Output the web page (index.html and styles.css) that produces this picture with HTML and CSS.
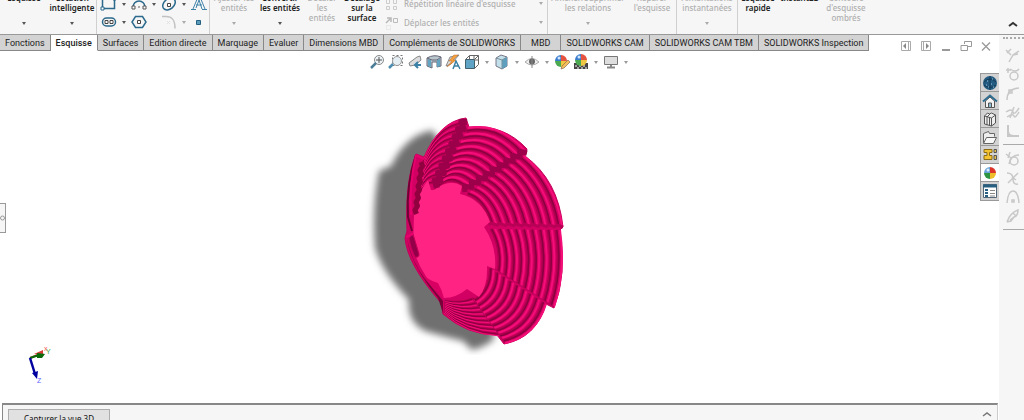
FILE: index.html
```html
<!DOCTYPE html>
<html lang="fr">
<head>
  <meta charset="UTF-8">
  <meta name="viewport" content="width=device-width, initial-scale=1.0">
  <title>SOLIDWORKS</title>
  <link rel="stylesheet" href="styles.css">
</head>
<body>
  <header class="ribbon">
    <div class="group">
      <button class="tool w-sketch"><span>Esquisse</span><i class="caret"></i></button>
      <button class="tool w-dim"><span>Cotation<br>intelligente</span><i class="caret"></i></button>
    </div>
    <div class="group shapes">
      <button class="shape" aria-label="Rectangle"><svg width="18" height="16"><path d="M2.500 2.500h12v10h-12z" fill="none" stroke="#2b6a8c" stroke-width="1.500"/><path d="M1 11h3v3H1zM13 1h3v3h-3z" fill="#fff" stroke="#2b6a8c"/></svg></button><i class="caret"></i>
      <button class="shape" aria-label="Arc"><svg width="18" height="16"><path d="M3 11a6 6 0 0 1 12 0" fill="none" stroke="#2b6a8c" stroke-width="1.500"/><path d="M2 10h3v3H2zM13 10h3v3h-3z" fill="#fff" stroke="#555"/><path d="M8 10l2 2m0-2l-2 2" stroke="#aaa"/></svg></button><i class="caret"></i>
      <button class="shape" aria-label="Ellipse"><svg width="18" height="16"><ellipse cx="9" cy="8" rx="7" ry="5" transform="rotate(-40 9 8)" fill="none" stroke="#2b6a8c" stroke-width="1.500"/><path d="M7.500 7.500h3v3h-3z" fill="#fff" stroke="#444"/></svg></button><i class="caret"></i>
      <button class="shape" aria-label="Texte"><svg width="18" height="16"><path d="M3 13L8 1h2l5 12M6 9h6M1 13.500h5m6 0h5M6 12L9 4l3 9" fill="none" stroke="#3f82a8"/></svg></button>
      <button class="shape" aria-label="Rainure"><svg width="18" height="16"><rect x="2.500" y="4" width="13" height="8" rx="4" fill="none" stroke="#2b6a8c" stroke-width="1.500"/><path d="M5 6.500h3v3H5zM10 6.500h3v3h-3z" fill="#fff" stroke="#444"/></svg></button><i class="caret"></i>
      <button class="shape" aria-label="Polygone"><svg width="18" height="16"><path d="M5.500 2.500h7L16 8l-3.500 5.500h-7L2 8z" fill="none" stroke="#2b6a8c" stroke-width="1.500"/><path d="M7.500 6.500h3v3h-3z" fill="#fff" stroke="#444"/></svg></button><i></i>
      <button class="shape" aria-label="Congé"><svg width="18" height="16"><path d="M2 2.500h4c6 0 9 3 9 12" fill="none" stroke="#c2c2c2" stroke-width="1.500"/><path d="M7 7l3 3m0-3l-3 3" stroke="#e2e2e2"/></svg></button><i class="caret dim"></i>
      <button class="shape" aria-label="Point"><svg width="18" height="16"><path d="M6.500 6.500h4v4h-4z" fill="#5b9dbd" stroke="#24607f"/></svg></button>
    </div>
    <div class="group">
      <button class="tool w-add" disabled><span>Ajuster les<br>entités</span><i class="caret"></i></button>
      <button class="tool w-conv"><span>Convertir<br>les entités</span><i class="caret"></i></button>
      <button class="tool w-off" disabled><span>Décaler<br>les<br>entités</span></button>
      <button class="tool w-off"><span>Décalage<br>sur la<br>surface</span></button>
      <div class="rows">
        <button class="row" disabled><svg width="14" height="14"><path d="M1.500 2.500h3v4h-3zM8.500 2.500h3v4h-3zM1.500 9.500h3v3h-3zM8.500 9.500h3v3h-3z" fill="none" stroke="#ccc"/></svg><span>Répétition linéaire d'esquisse</span><i class="caret"></i></button>
        <button class="row" disabled><svg width="14" height="14"><path d="M1 7l4-4M2 2h4v4" fill="none" stroke="#b8b8b8" stroke-width="1.500"/><path d="M8.500 2.500h4v4h-4z" fill="none" stroke="#bbb"/><path d="M1.500 9.500h4v4h-4z" fill="none" stroke="#ddd" stroke-dasharray="1 1"/></svg><span>Déplacer les entités</span><i class="caret"></i></button>
      </div>
    </div>
    <div class="group">
      <button class="tool w-rel" disabled><span>Afficher/Supprimer<br>les relations</span><i class="caret"></i></button>
      <button class="tool w-rep" disabled><span>Réparer<br>l'esquisse</span></button>
    </div>
    <div class="group">
      <button class="tool w-snap" disabled><span>Aimantations<br>instantanées</span><i class="caret"></i></button>
    </div>
    <div class="group last">
      <button class="tool w-off"><span>Esquisse<br>rapide</span></button>
      <button class="tool w-conv"><span>Instant2D</span></button>
      <button class="tool w-rep" disabled><span>Contours<br>d'esquisse<br>ombrés</span></button>
    </div>
    <button class="collapse" aria-label="Réduire"><svg width="10" height="6"><path d="M1 5l4-3 4 3" fill="none" stroke="#333" stroke-width="2"/></svg></button>
  </header>

  <div class="workspace">
    <main class="main">
      <div class="tabbar">
        <nav class="tabs">
          <a href="#">Fonctions</a>
          <a href="#" class="active">Esquisse</a>
          <a href="#">Surfaces</a>
          <a href="#">Edition directe</a>
          <a href="#">Marquage</a>
          <a href="#">Evaluer</a>
          <a href="#">Dimensions MBD</a>
          <a href="#">Compléments de SOLIDWORKS</a>
          <a href="#" class="wide">MBD</a>
          <a href="#">SOLIDWORKS CAM</a>
          <a href="#">SOLIDWORKS CAM TBM</a>
          <a href="#">SOLIDWORKS Inspection</a>
        </nav>
        <div class="window-buttons">
          <button aria-label="Volet gauche"><svg width="12" height="12"><path d="M1.500 1.500h9v9h-9zM8.500 2v8" fill="none" stroke="#aaa"/><path d="M6 3v6L3 6z" fill="#888"/></svg></button>
          <button aria-label="Volet droit"><svg width="12" height="12"><path d="M1.500 1.500h9v9h-9zM3.500 2v8" fill="none" stroke="#aaa"/><path d="M6 3v6l3-3z" fill="#888"/></svg></button>
          <button aria-label="Réduire"><svg width="12" height="12"><path d="M2 10h8" stroke="#999" stroke-width="2"/></svg></button>
          <button aria-label="Restaurer"><svg width="12" height="12"><path d="M4.500 4V1.500h7v5H8M1 5.500h6.500v5H1z" fill="none" stroke="#999"/></svg></button>
          <button aria-label="Fermer"><svg width="12" height="12"><path d="M2 2.500l8 8m0-8l-8 8" fill="none" stroke="#999" stroke-width="1.300"/></svg></button>
        </div>
      </div>

      <section class="canvas">
        <svg class="model" width="220" height="250" viewBox="360 105 220 250" role="img" aria-label="Bol">
          <defs>
            <filter id="soft" x="-20%" y="-20%" width="140%" height="140%"><feGaussianBlur stdDeviation="3.500"/></filter>
          </defs>
          <path filter="url(#soft)" fill="#707070" d="M432 130Q405 136 391 166L379 171Q372 205 375 248Q382 272 409 300Q407 322 425 331Q446 337 463 341L472 350Q485 347 494 339L480 200Z"/>
          <path class="body" d="M466 118Q440 121 424 157L416 154Q405 180 407 231L405 238Q407 264 441 303L443 314Q467 335 497 335L504 344Q536 338 546 304L554 308Q567 275 560 230L563 227Q558 180 525 156L527 149Q504 124 469 127Z"/>
          <g id="ribs"></g>
          <path class="floor" d="M434 190Q450 178 462 186L460 194Q482 199 490 222L484 227Q497 246 495 269L487 266Q488 286 479 297L467 289Q456 298 444 298Q424 280 413 250L414 215Q418 192 428 180L431 190Z"/>
          <g id="steps"></g>
          <path d="M421 272Q427 280 438 283Q442 290 444 298Q433 289 421 272" fill="#d90063"/>
          <path d="M407 238Q412 265 430 285L443 301V313L438 298Q410 264 407 238" fill="#7a0039"/>
          <path d="M413 234l6 20q0 4-4 3q-5-10-6-19z" fill="#92004a" stroke="#c60059"/>
          <path d="M416 155Q406 185 408 217l4 14" fill="none" stroke="#6f0034" stroke-width="2"/>
          <path d="M416 155Q409 185 411 215" fill="none" stroke="#e7006d" stroke-width="2"/>
          <path d="M416 155l8 4M406 237l7-3" stroke="#e7006d" stroke-width="2"/>
        </svg>

        <div class="headsup">
          <button aria-label="Zoom au mieux"><svg width="16" height="16"><circle cx="10" cy="6" r="4.500" fill="#eef4f7" stroke="#888"/><path d="M7 9l-5 5" stroke="#4b7d99" stroke-width="2.500"/><path d="M10 3v6M7 6h6" stroke="#555"/></svg></button>
          <button aria-label="Zoom fenêtre"><svg width="16" height="16"><path d="M4.500 1.500h10v10h-10z" fill="none" stroke="#777" stroke-dasharray="2 2"/><circle cx="9" cy="7" r="4.500" fill="#e5eef3" stroke="#999"/><path d="M5 10l-4 4" stroke="#4b8db0" stroke-width="2.500"/></svg></button>
          <button aria-label="Vue précédente"><svg width="16" height="16"><path d="M2 9l8-6 3-1 1 4-6 5-5 1z" fill="#ddd" stroke="#888"/><path d="M14 11H8m3-3l-3 3 3 3" fill="none" stroke="#3a81a5" stroke-width="2"/></svg></button>
          <button aria-label="Vue en coupe"><svg width="16" height="16"><path d="M1 4q7-4 14-1v9l-4 1V8H6v6l-5-2z" fill="#b9c6cc" stroke="#667"/><path d="M2 5l3 1v7l-3-1zM11 6l3-1v7l-3 1z" fill="#62a5c3"/><path d="M1 4l5 2h5l4-3" fill="none" stroke="#667"/></svg></button>
          <button aria-label="Vues dynamiques"><svg width="16" height="16"><path d="M1 12L5 3l9-2-8 9z" fill="#ddd" stroke="#888"/><path d="M9 1L4 7h3l-5 6 9-7H8l5-5z" fill="#f6a13c" stroke="#bb6e30" stroke-width=".5"/><path d="M8 15l3-8 4 8M9 12h5" fill="none" stroke="#3a81a5" stroke-width="1.500"/></svg></button>
          <button aria-label="Orientation"><svg width="16" height="16"><path d="M1.500 5.500h9v9h-9z" fill="#5fa4c4" stroke="#44606d"/><path d="M1.500 5.500l4-4h9v9l-4 4M5.500 1.500v4M10.500 5.500l4-4M10 1.500v4M14 6h-4" fill="none" stroke="#666"/></svg></button><i class="caret"></i>
          <button aria-label="Style d'affichage"><svg width="16" height="16"><path d="M2 4l5-3 6 2v9l-5 3-6-3z" fill="#c3dfea" stroke="#778"/><path d="M8 6l5-3v9l-5 3z" fill="#5d9fbf"/><path d="M2 4l6 2v9M8 6l5-3" fill="none" stroke="#7a929c"/></svg></button><i class="caret"></i>
          <button aria-label="Masquer/Afficher"><svg width="16" height="16"><path d="M1 8q7-7 14 0q-7 6-14 0z" fill="#eee" stroke="#aaa"/><circle cx="8" cy="7.500" r="3" fill="#666"/><path d="M8 2v12" stroke="#888"/></svg></button><i class="caret"></i>
          <button aria-label="Apparence"><svg width="16" height="16"><path d="M7 7V1a6 6 0 0 1 6 6z" fill="#e5533e"/><path d="M7 7H1a6 6 0 0 1 6-6z" fill="#397dce"/><path d="M7 7v6a6 6 0 0 1-6-6z" fill="#4baa51"/><path d="M7 7h6a6 6 0 0 1-6 6z" fill="#f0c740"/><circle cx="5" cy="4" r="1.500" fill="#cfe4f8"/><path d="M14 6l-6 6-1 3 3-1 6-6z" fill="#f4bd5d" stroke="#8a6c4e" stroke-width=".7"/></svg></button>
          <button aria-label="Scène"><svg width="16" height="16"><path d="M1 9h14v6H1z" fill="#444"/><path d="M2 12h2m2 0h2m2 0h2M4 14h2m2 0h2m2 0h2" stroke="#fff"/><path d="M8 6V0a6 6 0 0 1 6 6z" fill="#e5533e"/><path d="M8 6H2a6 6 0 0 1 6-6z" fill="#397dce"/><path d="M8 6v6a6 6 0 0 1-6-6z" fill="#4baa51"/><path d="M8 6h6a6 6 0 0 1-6 6z" fill="#f0c740"/><circle cx="6" cy="3" r="1.500" fill="#cfe4f8"/></svg></button><i class="caret"></i>
          <button aria-label="Paramètres de vue"><svg width="16" height="16"><path d="M1.500 2.500h13v8h-13z" fill="#ddd" stroke="#777"/><path d="M8 11v2M4 13.500h8" stroke="#888" stroke-width="2"/></svg></button><i class="caret"></i>
        </div>

        <button class="handle" aria-label="Afficher l'arbre"><svg width="5" height="6"><circle cx="2.500" cy="3" r="2" fill="none" stroke="#999"/></svg></button>

        <svg class="triad" width="30" height="44" viewBox="25 340 30 44">
          <path d="M30 358L43 353" stroke="#c94040" stroke-width="2"/>
          <path d="M34 354l9-4v5z" fill="#d43b36"/>
          <path d="M30 358l9-3" stroke="#086a08" stroke-width="2"/>
          <path d="M37 353l8 1-3 4-5 0z" fill="#086a08"/>
          <path d="M30 358l5 16" stroke="#0000a0" stroke-width="2.500"/>
          <path d="M32 373l6-2-1 8z" fill="#0000a0"/>
          <text x="44" y="351" fill="#f35b5b">x</text>
          <text x="46" y="354" fill="#45a845">Y</text>
          <text x="37" y="383" fill="#6060ff">Z</text>
        </svg>

        <div class="taskpane">
          <button aria-label="Communauté"><svg width="16" height="16"><circle cx="8" cy="8" r="7" fill="#245b80"/><path d="M2 7q6-6 12 0M2 10q6 5 12 0M8 1v14" fill="none" stroke="#143b58"/><path d="M5 6h1m4-2h1M4 10h1m4-1h1m1 3h1M6 12h1" stroke="#9ac6dc"/></svg></button>
          <button aria-label="Accueil"><svg width="16" height="16"><path d="M3.500 8v6.500h9V8L8 4z" fill="#f4f4f4" stroke="#555"/><path d="M1 8.500l7-6 7 6" fill="none" stroke="#2f6c8f" stroke-width="2"/><path d="M6.500 14v-4h3v4" fill="#8ebdd1" stroke="#555"/></svg></button>
          <button aria-label="Bibliothèque"><svg width="16" height="16"><path d="M2.500 5l3-3 2 1 2-1 4 2v8l-4 3-7-2z" fill="#eee" stroke="#555"/><path d="M2.500 5l7 2 4-3M5 6v8M7.500 6v8M9.500 7v8M5 6l3-3" fill="none" stroke="#555"/></svg></button>
          <button aria-label="Explorateur"><svg width="16" height="16"><path d="M1.500 14V4.500l5-2 1 2h5v3" fill="#eee" stroke="#666"/><path d="M1.500 14.500l3-6h10l-3 6z" fill="#f8f8f8" stroke="#666"/></svg></button>
          <button aria-label="Palette de vues"><svg width="16" height="16"><path d="M2 2.500h8v3H7.500v3H10v4H2v-4h3v-3H2z" fill="#f3c331" stroke="#8d6b15"/><path d="M12 2.500h2.500v3H12zM12 8.500h2.500v4H12z" fill="#e5bd49" stroke="#555"/></svg></button>
          <button class="active" aria-label="Apparences"><svg width="16" height="16"><path d="M8 8V2a6 6 0 0 1 6 6z" fill="#dc3429"/><path d="M8 8H2a6 6 0 0 1 6-6z" fill="#69a3da"/><path d="M8 8v6a6 6 0 0 1-6-6z" fill="#2d9442"/><path d="M8 8h6a6 6 0 0 1-6 6z" fill="#efbd27"/><circle cx="6" cy="5" r="1.500" fill="#dceeff"/></svg></button>
          <button aria-label="Propriétés"><svg width="16" height="16"><path d="M1.500 1.500h13v13h-13z" fill="#fff" stroke="#567"/><path d="M1 3h14" stroke="#286082" stroke-width="3"/><path d="M3 7h3M3 10h3M3 13h3" stroke="#286082" stroke-width="2"/><path d="M8 7.500h5M8 10.500h5M8 13h5" stroke="#888"/></svg></button>
        </div>
      </section>

      <footer class="bottom">
        <button class="capture">Capturer la vue 3D</button>
        <button class="expand" aria-label="Développer"><svg width="10" height="6"><path d="M1 5l4-3 4 3" fill="none" stroke="#777" stroke-width="1.500"/></svg></button>
      </footer>
    </main>

    <aside class="side">
      <button aria-label="Coupe"><svg width="16" height="16"><path d="M1 3l5 5M6 2L2 6M4 15L8 8l6-4M8 8l5-1" fill="none"/></svg></button>
      <button aria-label="Cercle tangent"><svg width="16" height="16"><path d="M1 4h5M3 2v5M5 3q6 4 9 0" fill="none"/><circle cx="9" cy="10" r="4" fill="none"/></svg></button>
      <button aria-label="Arc tangent"><svg width="16" height="16"><path d="M2 15q0-11 12-12" fill="none"/><path d="M4 5h3v3H4z"/></svg></button>
      <button aria-label="Spline"><svg width="16" height="16"><path d="M1 8q6-4 7 0t6-4M2 13q6-4 7-1t5-4M9 3l-4 11" fill="none"/></svg></button>
      <button aria-label="Congé"><svg width="16" height="16"><path d="M3 2v11h11M3 8q0 5 6 5" fill="none" stroke-width="2"/></svg></button>
      <hr>
      <button aria-label="Relation"><svg width="16" height="16"><path d="M1 3l5 4M5 1L3 7M4 13Q6 4 14 4" fill="none"/><circle cx="9" cy="10" r="4" fill="none"/></svg></button>
      <button aria-label="Intersection"><svg width="16" height="16"><path d="M2 3q6 0 6 6t5 5M13 3L3 13M7 7l4 3" fill="none"/></svg></button>
      <button aria-label="Parabole"><svg width="16" height="16"><path d="M2 14Q3 2 8 2t6 12" fill="none"/><path d="M7 11h2v2H7z"/></svg></button>
      <button aria-label="Conique"><svg width="16" height="16"><path d="M2 14Q5 5 13 2Q13 8 9 9L5 12M2 14l4-1 3-4M8 5l3 3" fill="none"/></svg></button>
      <hr>
    </aside>
  </div>
  <script src="model.js"></script>
</body>
</html>
```

FILE: styles.css
```css
* {
  box-sizing: border-box;
}

body {
  margin: 0;
  height: 100vh;
  display: flex;
  flex-direction: column;
  overflow: hidden;
  background: #fff;
  color: #222;
  font-family: "Noto Sans", "Open Sans", sans-serif;
  font-size: 8px;
}

button {
  margin: 0;
  padding: 0;
  border: none;
  background: none;
  color: inherit;
  font: inherit;
}

svg {
  display: block;
}

.caret {
  width: 0;
  height: 0;
  border: 2px solid transparent;
  border-top: 3px solid #555;
  border-bottom: none;
}

/* ribbon */
.ribbon {
  position: relative;
  z-index: 1;
  display: flex;
  align-items: flex-end;
  flex: none;
  height: 35px;
  overflow: hidden;
  background: #f6f6f6;
  border-bottom: 1px solid #999;
}

.group {
  display: flex;
  flex: none;
  height: 41px;
  border-right: 1px solid #d0d0d0;
}

.group.last {
  border: none;
}

.tool {
  display: flex;
  flex-direction: column;
  align-items: center;
  flex: none;
  line-height: 10px;
  font-weight: 600;
  white-space: nowrap;
}

.tool .caret {
  margin-top: auto;
  margin-bottom: 9px;
}

.tool:disabled,
.row:disabled {
  color: #b0b0b0;
  font-weight: 500;
}

:disabled .caret,
.caret.dim {
  border-top-color: #aaa;
}

.w-sketch { width: 48px; }
.w-dim { width: 48px; }
.w-add { width: 48px; }
.w-conv { width: 44px; }
.w-off { width: 40px; }
.w-rel { width: 80px; }
.w-rep { width: 48px; }
.w-snap { width: 60px; }

.shapes {
  display: grid;
  grid-template-columns: 18px 12px 18px 12px 18px 12px 18px;
  grid-auto-rows: 18px;
  align-content: end;
  align-items: center;
  justify-items: center;
  padding: 0 1px 3px 3px;
}

.rows {
  width: 165px;
  display: flex;
  flex-direction: column;
  justify-content: flex-end;
  padding: 0 4px 2px 3px;
}

.row {
  display: flex;
  align-items: center;
  gap: 5px;
  height: 19px;
  white-space: nowrap;
}

.row .caret {
  margin-left: auto;
}

.collapse {
  margin: 0 6px 7px auto;
}

/* workspace */
.workspace {
  display: flex;
  flex: 1;
  min-height: 0;
}

.main {
  display: flex;
  flex-direction: column;
  flex: 1;
  min-width: 0;
}

.tabbar {
  display: flex;
  align-items: flex-start;
  justify-content: space-between;
  flex: none;
  height: 16px;
}

.tabs {
  display: flex;
}

.tabs a {
  height: 16px;
  padding: 0 5px;
  border-right: 1px solid #888;
  border-bottom: 1px solid #888;
  background: #d3d3d3;
  color: #222;
  font-family: Roboto, sans-serif;
  font-size: 9px;
  line-height: 16px;
  text-decoration: none;
  white-space: nowrap;
}

.tabs a.active {
  background: #fff;
  border-bottom-color: #fff;
  font-weight: 500;
}

.tabs a.wide {
  padding: 0 10px;
}

.window-buttons {
  display: flex;
  gap: 8px;
  padding: 5px 7px 0 0;
}

.canvas {
  position: relative;
  flex: 1;
  min-height: 0;
}

.model {
  position: absolute;
  left: calc(50% - 140px);
  top: 54px;
}

.body {
  fill: #d20062;
  stroke: #c6005c;
}

.floor {
  fill: #ff2384;
}

.headsup {
  display: flex;
  align-items: center;
  justify-content: center;
  gap: 3px;
  height: 22px;
}

.headsup .caret {
  margin: 0 2px;
  border-top-color: #999;
}

.handle {
  position: absolute;
  left: 0;
  top: 152px;
  width: 6px;
  height: 30px;
  border: 1px solid #999;
  border-left: none;
  background: #f6f6f6;
}

.triad {
  position: absolute;
  left: 25px;
  bottom: 19px;
  font-family: "Liberation Sans", sans-serif;
  font-size: 7px;
}

.taskpane {
  position: absolute;
  right: 0;
  top: 22px;
  width: 19px;
  border: 1px solid #999;
  border-right: none;
}

.taskpane button {
  display: flex;
  align-items: center;
  justify-content: center;
  width: 100%;
  height: 18px;
  background: #d3d3d3;
  border-bottom: 1px solid #999;
}

.taskpane button:last-child {
  border-bottom: none;
}

.taskpane button.active {
  background: #fff;
}

.side {
  flex: none;
  width: 25px;
  padding-top: 2px;
  background: #f6f6f6;
}

.side::before {
  content: "";
  display: block;
  margin: 0 0 6px 4px;
  border-top: 2px dotted #aaa;
}

.side button {
  display: block;
  height: 19px;
  margin-left: 6px;
}

.side svg {
  fill: none;
  stroke: #c8c8c8;
  stroke-width: 1.5;
}

.side hr {
  margin: 4px 0 4px 4px;
  border: none;
  border-top: 1px solid #aaa;
}

/* bottom panel */
.bottom {
  display: flex;
  justify-content: space-between;
  align-items: flex-start;
  flex: none;
  height: 17px;
  margin: 0 1px 0 2px;
  padding: 4px 5px 0;
  overflow: hidden;
  background: #f6f6f6;
  border: 1px solid #ccc;
  border-top: 2px solid #888;
  border-left-color: #888;
  border-bottom: none;
}

.capture {
  width: 102px;
  height: 18px;
  border: 1px solid #adadad;
  background: #e1e1e1;
  color: #111;
}

.expand {
  margin-top: 2px;
}
```

FILE: model.js
```js
// each sector: outer edge and inner edge, as start / control / end
const sectors = [
  { outer: [[424, 159], [438, 122], [465, 120]], inner: [[418, 200], [420, 186], [435, 186]], wall: 6 },
  { outer: [[468, 128], [500, 122], [525, 151]], inner: [[436, 190], [448, 176], [463, 190]], wall: 5 },
  { outer: [[524, 156], [555, 182], [562, 226]], inner: [[464, 196], [480, 200], [488, 224]], wall: 3 },
  { outer: [[560, 230], [566, 272], [554, 307]], inner: [[487, 229], [498, 246], [495, 269]], wall: 1 },
  { outer: [[546, 304], [536, 336], [505, 343]], inner: [[487, 266], [488, 288], [472, 298]], wall: 1 },
  { outer: [[500, 336], [466, 334], [444, 313]], inner: [[472, 296], [460, 302], [445, 300]], wall: 1 }
];
const ribCount = 9;
const svgNs = 'http://www.w3.org/2000/svg';

function mix(a, b, t) {
  return [a[0] + (b[0] - a[0]) * t, a[1] + (b[1] - a[1]) * t];
}

function addPath(parent, d, color, width) {
  const path = document.createElementNS(svgNs, 'path');
  path.setAttribute('d', d);
  path.setAttribute('fill', 'none');
  path.setAttribute('stroke', color);
  path.setAttribute('stroke-width', width);
  path.setAttribute('stroke-linejoin', 'round');
  parent.appendChild(path);
}

function arc(sector, t) {
  const [a, c, b] = sector.outer.map((p, k) => mix(p, sector.inner[k], t));
  return `M${a}Q${c} ${b}`;
}

const ribs = document.getElementById('ribs');
const steps = document.getElementById('steps');

sectors.forEach((sector, index) => {
  const flat = index === 0 || index === 5;
  for (let i = 0; i < ribCount; i++) {
    // groove, its soft edge, then the lit top of the rib
    addPath(ribs, arc(sector, (i + 0.5) / ribCount), '#b00050', flat ? 2 : 3);
    addPath(ribs, arc(sector, (i + 0.4) / ribCount), '#8a0040', flat ? 1 : 1.5);
    addPath(ribs, arc(sector, i / ribCount), '#f50d78', flat ? 1 : 2);
  }

  // serrated wall at the end of the sector
  let wall = '';
  for (let i = 0; i <= ribCount * 2; i++) {
    const p = mix(sector.outer[2], sector.inner[2], i / (ribCount * 2));
    const shift = sector.wall > 3 ? 2 : sector.wall > 1 ? 1 : 0;
    const side = i % 2 ? -shift : shift;
    wall += `${i ? 'L' : 'M'}${p[0] + side} ${p[1] + side}`;
  }
  addPath(steps, wall, index < 2 ? '#9c004a' : '#b80056', sector.wall);
});

// folded strip on the left rim
let fold = 'M421 162';
for (let i = 1; i < 14; i++) {
  fold += `L${421 - i / 2 + (i % 2 ? 2 : 0)} ${162 + i * 4}`;
}
addPath(steps, fold, '#91003f', 5);
```
